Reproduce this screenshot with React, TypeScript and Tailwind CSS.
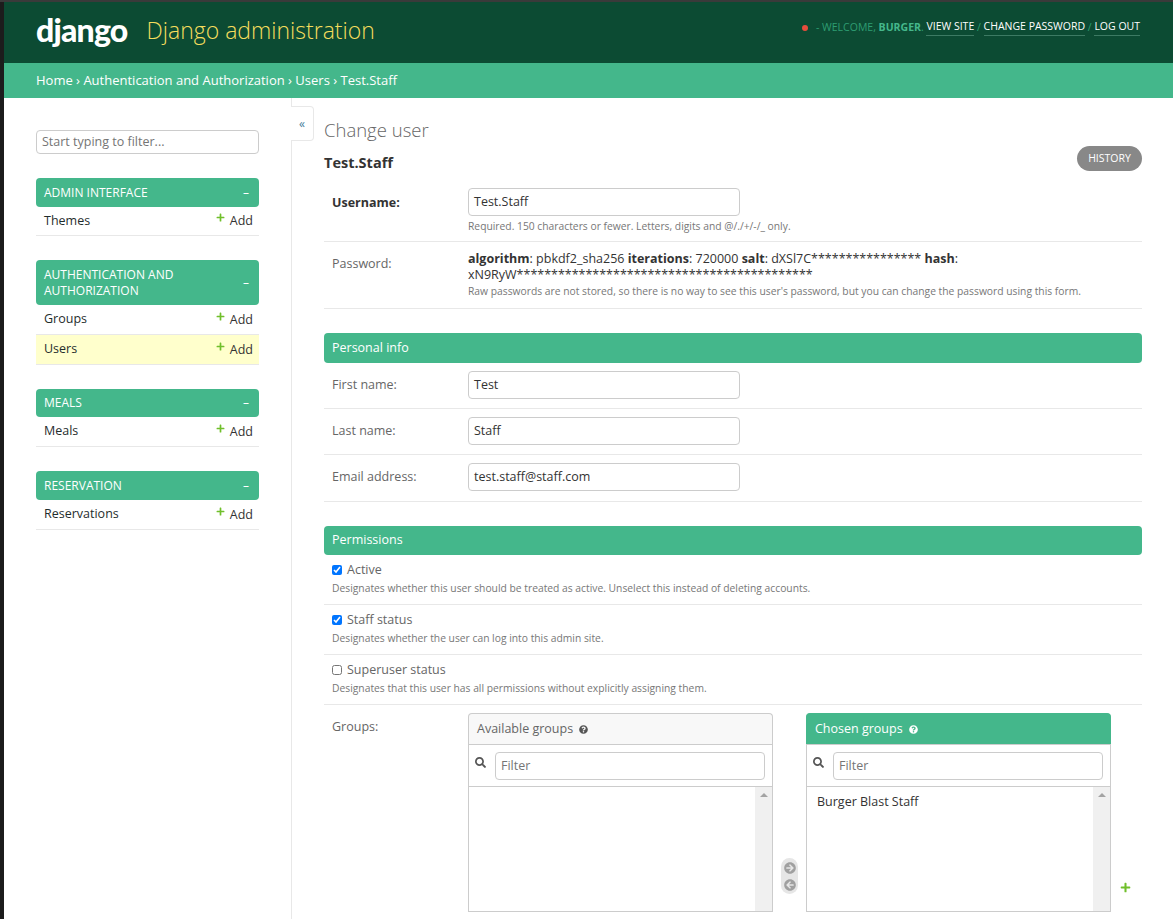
import { FaPlus, FaSearch, FaQuestionCircle, FaArrowCircleRight, FaArrowCircleLeft } from "react-icons/fa";

const font = { fontFamily: '"Open Sans", "Noto Sans", sans-serif' };

function AddLink() {
  return (
    <span className="flex items-start gap-[5px] text-[#333]">
      <FaPlus className="mt-[2px] text-[9px] text-[#70bf2b]" />
      <span className="mt-[1px]">Add</span>
    </span>
  );
}

function Module({ title, rows, hClass }: { title: React.ReactNode; rows: { n: string; h: string; active?: boolean }[]; hClass: string }) {
  return (
    <div className="mb-[24px]">
      <div className={`flex items-center justify-between rounded-[4px] bg-[#44b78b] pl-[8px] pr-[9px] text-[12px] leading-[16px] text-white ${hClass}`}>
        <span>{title}</span>
        <span className="mr-[1px] text-[12px]">–</span>
      </div>
      {rows.map((r) => (
        <div key={r.n} className={`flex items-center justify-between border-b border-[#e8e8e8] pl-[8px] pr-[6px] text-[12.5px] ${r.h} ${r.active ? "bg-[#ffffcc]" : ""}`}>
          <span className="text-[#1f2d2d]">{r.n}</span>
          <AddLink />
        </div>
      ))}
    </div>
  );
}

function TextRow({ label, value, h, top, bold }: { label: string; value: string; h: string; top: string; bold?: boolean }) {
  return (
    <div className={`flex border-b border-[#e8e8e8] pl-[8px] ${h}`}>
      <label className={`w-[136px] text-[12.5px] ${top} ${bold ? "font-bold text-[#333]" : "text-[#666]"}`}>{label}</label>
      <div className="h-[28px] w-[272px] rounded-[4px] border border-[#ccc] bg-white px-[5px] text-[12.5px] leading-[26px] text-[#333]">{value}</div>
    </div>
  );
}

function CheckRow({ label, help, checked }: { label: string; help: string; checked: boolean }) {
  return (
    <div className="h-[50px] border-b border-[#e8e8e8] pl-[8px] pt-[7px]">
      <div className="flex h-[16px] items-center">
        <input type="checkbox" defaultChecked={checked} className="m-0 mr-[5px] h-[10px] w-[10px]" />
        <span className="text-[12.5px] text-[#666]">{label}</span>
      </div>
      <div className="mt-[3px] text-[10.3px] leading-[14px] text-[#777]">{help}</div>
    </div>
  );
}

function Selector({ title, chosen }: { title: string; chosen?: boolean }) {
  return (
    <div className="h-[199px] w-[305px] shrink-0 overflow-hidden">
      <div className={`flex h-[31px] items-center rounded-t-[4px] border border-b-0 pl-[8px] text-[12.5px] ${chosen ? "border-[#44b78b] bg-[#44b78b] text-white" : "border-[#ccc] bg-[#f8f8f8] text-[#666]"}`}>
        {title}
        <FaQuestionCircle className={`ml-[6px] text-[9px] ${chosen ? "text-white" : "text-[#555]"}`} />
      </div>
      <div className="flex h-[42px] items-start border border-b-0 border-[#ccc] pl-[6px] pr-[7px] pt-[7px]">
        <FaSearch className="mr-[9px] mt-[5px] shrink-0 text-[11px] text-[#555]" />
        <div className="h-[28px] flex-1 rounded-[4px] border border-[#ccc] px-[5px] text-[12.5px] leading-[26px] text-[#757575]">Filter</div>
      </div>
      <div className="flex h-[126px] border border-[#ccc]">
        <div className="flex-1 pl-[10px] pt-[6px] text-[12.5px] text-[#333]">{chosen ? "Burger Blast Staff" : ""}</div>
        <div className="flex w-[17px] justify-center bg-[#f0f0f0] pt-[6px]">
          <div className="h-0 w-0 border-x-[4px] border-b-[4px] border-x-transparent border-b-[#a3a3a3]" />
        </div>
      </div>
    </div>
  );
}

export default function App() {
  return (
    <div style={font} className="flex h-[919px] w-[1173px] flex-col overflow-hidden bg-[#3a3a3a]">
      <div className="h-[2px] shrink-0" />
      <div className="flex min-h-0 flex-1">
        <div className="w-[4px] shrink-0 bg-[#1c1c1c]" />
        <div className="flex min-w-0 flex-1 flex-col bg-white">
          <header className="flex h-[61px] shrink-0 justify-between bg-[#0c4b33] pl-[32px] pr-[33px]">
            <div className="flex items-start">
              <span style={{ fontFamily: "Lato, sans-serif" }} className="mt-[9px] text-[32px] font-black leading-[38px] tracking-[-0.8px] text-white">django</span>
              <span className="ml-[19px] mt-[10px] text-[23px] font-light leading-[36px] text-[#f5dd5d]">Django administration</span>
            </div>
            <div className="mt-[17px] flex h-[17px] items-center text-[10.5px] uppercase text-[#2e9d72]">
              <span className="mr-[8px] h-[6px] w-[6px] rounded-full bg-[#e74c3c]" />
              <span>- Welcome, <b className="text-[#44b78b]">Burger</b>.&nbsp;</span>
              <span className="border-b border-[#3d7a63] text-white">View site</span>
              <span>&nbsp;/&nbsp;</span>
              <span className="border-b border-[#3d7a63] text-white">Change password</span>
              <span>&nbsp;/&nbsp;</span>
              <span className="border-b border-[#3d7a63] text-white">Log out</span>
            </div>
          </header>
          <nav className="flex h-[35px] shrink-0 items-center bg-[#44b78b] pl-[32px] text-[13px] text-white">
            Home › Authentication and Authorization › Users › Test.Staff
          </nav>
          <div className="flex min-h-0 flex-1">
            <aside className="w-[288px] shrink-0 border-r border-[#e8e8e8] pl-[32px] pr-[32px] pt-[32px]">
              <div className="mb-[24px] h-[24px] rounded-[4px] border border-[#ccc] px-[5px] text-[12.5px] leading-[22px] text-[#757575]">Start typing to filter...</div>
              <Module title="ADMIN INTERFACE" hClass="h-[29px]" rows={[{ n: "Themes", h: "h-[29px]" }]} />
              <Module title={<>AUTHENTICATION AND<br />AUTHORIZATION</>} hClass="h-[45px]" rows={[{ n: "Groups", h: "h-[30px]" }, { n: "Users", h: "h-[30px]", active: true }]} />
              <Module title="MEALS" hClass="h-[28px]" rows={[{ n: "Meals", h: "h-[30px]" }]} />
              <Module title="RESERVATION" hClass="h-[29px]" rows={[{ n: "Reservations", h: "h-[30px]" }]} />
            </aside>
            <main className="relative min-w-0 flex-1 pl-[32px] pr-[31px]">
              <button className="absolute left-[-1px] top-[8px] flex h-[35px] w-[23px] items-center justify-center rounded-r-[4px] border border-l-0 border-[#e8e8e8] bg-white text-[12px] text-[#447e9b]">«</button>
              <h1 className="mt-[19px] h-[26px] text-[18.5px] font-light leading-[26px] text-[#666]">Change user</h1>
              <div className="relative flex h-[45px] items-start justify-between">
                <h2 className="mt-[10px] text-[14.5px] font-bold leading-[20px] text-[#333]">Test.Staff</h2>
                <span className="mt-[3px] flex h-[25px] w-[65px] items-center justify-center rounded-full bg-[#888] text-[10.5px] text-white">HISTORY</span>
              </div>
              <TextRow label="Username:" value="" h="h-[0px] hidden" top="" />
              <div className="h-[54px] border-b border-[#e8e8e8] pl-[8px]">
                <div className="flex">
                  <label className="mt-[6px] w-[136px] text-[12.5px] font-bold text-[#333]">Username:</label>
                  <div>
                    <div className="h-[28px] w-[272px] rounded-[4px] border border-[#ccc] px-[5px] text-[12.5px] leading-[26px] text-[#333]">Test.Staff</div>
                    <div className="mt-[3px] text-[10.3px] leading-[14px] text-[#777]">Required. 150 characters or fewer. Letters, digits and @/./+/-/_ only.</div>
                  </div>
                </div>
              </div>
              <div className="flex h-[67px] border-b border-[#e8e8e8] pl-[8px]">
                <label className="mt-[13px] w-[136px] text-[12.5px] text-[#666]">Password:</label>
                <div className="pt-[9px]">
                  <div className="text-[12.5px] leading-[16px] text-[#333]">
                    <b>algorithm</b>: pbkdf2_sha256 <b>iterations</b>: 720000 <b>salt</b>: dXSl7C**************** <b>hash</b>:<br />
                    xN9RyW*******************************************
                  </div>
                  <div className="mt-[1px] text-[10.3px] leading-[14px] text-[#777]">Raw passwords are not stored, so there is no way to see this user's password, but you can change the password using this form.</div>
                </div>
              </div>
              <div className="mt-[24px] flex h-[30px] items-center rounded-[4px] bg-[#44b78b] pl-[8px] text-[12.5px] text-white">Personal info</div>
              <div className="pt-[8px]">
                <TextRow label="First name:" value="Test" h="h-[38px]" top="mt-[5px]" />
                <div className="pt-[8px]"><TextRow label="Last name:" value="Staff" h="h-[38px]" top="mt-[5px]" /></div>
                <div className="pt-[8px]"><TextRow label="Email address:" value="test.staff@staff.com" h="h-[39px]" top="mt-[5px]" /></div>
              </div>
              <div className="mt-[24px] flex h-[29px] items-center rounded-[4px] bg-[#44b78b] pl-[8px] text-[12.5px] text-white">Permissions</div>
              <CheckRow label="Active" checked help="Designates whether this user should be treated as active. Unselect this instead of deleting accounts." />
              <CheckRow label="Staff status" checked help="Designates whether the user can log into this admin site." />
              <CheckRow label="Superuser status" checked={false} help="Designates that this user has all permissions without explicitly assigning them." />
              <div className="flex pl-[8px] pt-[8px]">
                <label className="mt-[5px] w-[136px] text-[12.5px] text-[#666]">Groups:</label>
                <Selector title="Available groups" />
                <div className="mx-[8px] mt-[145px] flex h-[36px] w-[17px] flex-col items-center justify-center gap-[5px] rounded-full bg-[#e6e6e6] text-[12px] text-[#a0a0a0]">
                  <FaArrowCircleRight />
                  <FaArrowCircleLeft />
                </div>
                <Selector title="Chosen groups" chosen />
                <FaPlus className="ml-[9px] mt-[169px] text-[11px] text-[#70bf2b]" />
              </div>
            </main>
          </div>
        </div>
      </div>
    </div>
  );
}
